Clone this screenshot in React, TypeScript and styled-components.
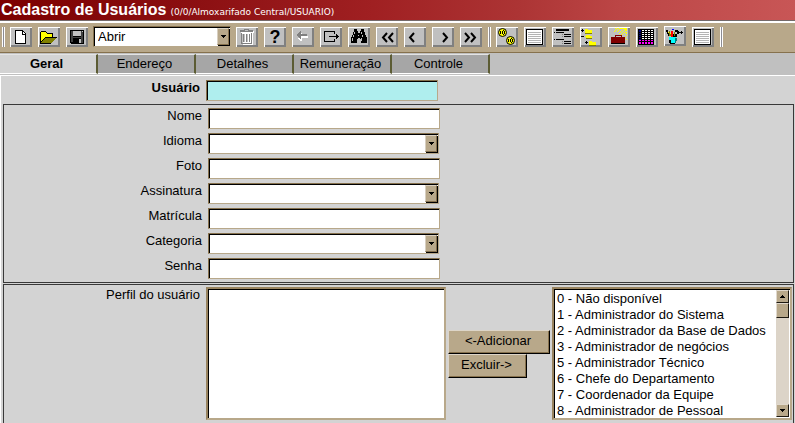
import React from "react";
import styled, { createGlobalStyle, css } from "styled-components";

const tan = "#b8a88a";
const brown = "#86714d";

const GlobalStyle = createGlobalStyle`
  * { box-sizing: border-box; }
  body {
    margin: 0;
    background: #d3d3d3;
    font-family: "Liberation Sans", Arial, sans-serif;
    font-size: 13px;
    color: #000;
  }
`;

const Page = styled.main`
  display: flex;
  flex-direction: column;
  min-height: 100vh;
`;

const TitleBar = styled.header`
  display: flex;
  align-items: baseline;
  gap: 4px;
  height: 21px;
  padding-left: 1px;
  line-height: 20px;
  color: #fff;
  white-space: nowrap;
  border-bottom: 1px solid #746a6a;
  background: linear-gradient(90deg, #7c0000 0%, #8c1012 25%, #a02022 47%, #ac3434 65%, #bc4646 78%, #c85656 100%);
`;

const Title = styled.h1`
  margin: 0;
  font-size: 16px;
  line-height: 20px;
`;

const Context = styled.span`
  font-family: "DejaVu Sans", Verdana, sans-serif;
  font-size: 9px;
`;

const ToolBar = styled.div`
  display: flex;
  align-items: flex-start;
  gap: 6px;
  height: 32px;
  padding: 4px 0 0 2px;
  background: ${tan};
  border-top: 2px solid #fff;
  border-bottom: 1px solid ${brown};
`;

const Grip = styled.span`
  width: 3px;
  height: 20px;
  margin: 0 -1px 0 0;
  border: 1px solid #fff;
  border-width: 0 1px;
  background: #8c8c94;
`;

const ToolButton = styled.button<{ $raised?: boolean }>`
  flex: none;
  width: 22px;
  height: 20px;
  padding: 0;
  overflow: hidden;
  border: 0;
  background: #c0c0c0;
  box-shadow: inset 1px 1px #fff, inset -2px -2px #808080;
  margin-top: ${(p) => (p.$raised ? "-1px" : "0")};
  font: bold 18px/19px "Liberation Sans", Arial, sans-serif;
  color: #000;

  svg { display: block; }
`;

const frame = css`
  border: 1px solid ${brown};
  border-right-color: ${tan};
  border-bottom-color: ${tan};
  border-radius: 0;
  box-shadow: inset 1px 1px #000;
  outline: none;
`;

const TextBox = styled.input<{ $key?: boolean }>`
  ${frame}
  width: 232px;
  height: 21px;
  padding: 1px 4px;
  font: inherit;
  background: ${(p) => (p.$key ? "#afeeee" : "#fff")};
`;

const DropFrame = styled.span<{ $tool?: boolean }>`
  display: grid;
  grid-template-columns: 1fr 14px;
  align-items: center;
  width: ${(p) => (p.$tool ? "138px" : "231px")};
  height: 21px;
  margin: ${(p) => (p.$tool ? "-1px -1px 0" : "0")};
`;

const DropSelect = styled.select`
  ${frame}
  appearance: none;
  grid-area: 1 / 1 / 2 / 3;
  width: 100%;
  height: 21px;
  padding: 0 16px 0 4px;
  font: inherit;
  background: #fff;
`;

const DropArrow = styled.span`
  grid-area: 1 / 2;
  display: flex;
  align-items: center;
  justify-content: center;
  width: 12px;
  height: 17px;
  pointer-events: none;
  background: ${tan};
  border: 1px solid #d8cfc0;
  border-right-color: ${brown};
  border-bottom-color: ${brown};
  box-shadow: 1px 1px #000;
`;

const TabStrip = styled.nav`
  display: flex;
  height: 23px;
  padding-top: 1px;
  background: #c0c0c0;
  border-bottom: 1px solid #fff;
`;

const Tab = styled.button<{ $active?: boolean }>`
  width: 98px;
  height: 20px;
  padding: 0 3px 1px 0;
  border: solid;
  border-width: 1px 2px 1px 0;
  border-color: #e4e4e4 #5c5c34 #fff #fff;
  background: ${(p) => (p.$active ? "#d3d3d3" : "#a6a6a6")};
  font: ${(p) => (p.$active ? "bold" : "normal")} 13px/16px "Liberation Sans", Arial, sans-serif;
  color: #000;
`;

const Form = styled.form`
  display: flex;
  flex: 1;
  flex-direction: column;
  gap: 1px;
  padding: 4px 1px 0 2px;
  border-left: 1px solid #fff;
  background: #d3d3d3;
`;

const Row = styled.div<{ $label: number }>`
  display: grid;
  grid-template-columns: ${(p) => p.$label}px 1fr;
  column-gap: 6px;
`;

const KeyRow = styled(Row)`
  margin-bottom: 2px;
`;

const Label = styled.label<{ $strong?: boolean }>`
  text-align: right;
  line-height: 16px;
  font-weight: ${(p) => (p.$strong ? "bold" : "normal")};
`;

const Group = styled.section`
  display: grid;
  gap: 4px;
  padding: 3px 0;
  border: 1px solid #383838;
`;

const ProfileGroup = styled(Group)`
  flex: 1;
  align-content: start;
  padding: 2px 0;
  border-bottom: 0;
`;

const Transfer = styled.div`
  display: flex;
  align-items: center;
  gap: 2px;
`;

const ListFrame = styled.div`
  display: flex;
  width: 240px;
  height: 133px;
  padding: 1px;
  background: #fff;
  border: 2px solid ${brown};
  border-color: ${tan};
  border-top-color: #98835f;
  border-left-color: #98835f;
  box-shadow: inset 1px 1px #000;
`;

const List = styled.select`
  flex: 1;
  min-width: 0;
  height: 127px;
  padding: 1px 0 0;
  border: 0;
  outline: none;
  appearance: none;
  overflow: hidden;
  scrollbar-width: none;
  background: transparent;
  font: inherit;

  option {
    min-height: 16px;
    padding: 0 2px;
    font-size: 13px;
    line-height: 16px;
    white-space: nowrap;
    color: #000;
  }
`;

const ScrollBar = styled.div`
  display: flex;
  flex-direction: column;
  flex: none;
  width: 13px;
  background: #dcd4c8;
`;

const ScrollPiece = styled.button<{ $thumb?: boolean }>`
  display: flex;
  align-items: center;
  justify-content: center;
  width: 13px;
  height: ${(p) => (p.$thumb ? "15px" : "13px")};
  padding: 0;
  background: ${tan};
  border: 1px solid #e0d8cc;
  border-right-color: #1c1810;
  border-bottom-color: #1c1810;

  &:last-child { margin-top: auto; }
`;

const Moves = styled.div`
  display: flex;
  flex-direction: column;
  align-items: flex-start;
  width: 102px;
`;

const MoveButton = styled.button<{ $wide?: boolean }>`
  width: ${(p) => (p.$wide ? "102px" : "79px")};
  height: 24px;
  padding: 0 2px 2px 0;
  background: ${tan};
  border: 1px solid #ddd5c8;
  border-right-color: #000;
  border-bottom-color: #000;
  box-shadow: inset -1px -1px ${brown};
  font: inherit;
`;

type Shape = [string, string];

/* Each shape is a fill colour and a path on the 22 x 20 button grid. */
const icons: Record<string, Shape[]> = {
  novo: [
    ["#000", "M5 3h8v1h1v1h1v1h1v11H5z"],
    ["#fff", "M6 4h6v4h3v8H6z"],
    ["#fff", "M13 5h1v1h1v1h-2z"],
  ],
  abrir: [
    ["#000", "M2 5h1V4h5v1h1v1h6v4h4v1h-1v1h-1v1h-1v1h-1v1h-1v1h-1v1H2z"],
    ["#ff0", "M3 5h5v1h1v1h5v3H7v1H6v1H5v1H4v1H3z"],
    ["#808000", "M7 11h11v1h-1v1h-1v1h-1v1h-1v1H3v-1h1v-1h1v-1h1v-1h1z"],
  ],
  salvar: [
    ["#000", "M4 3h14v14H5v-1H4z"],
    ["#404040", "M5 4h2v6h8V4h2v12h-2v-5H7v4H5z"],
    ["#c0c0c0", "M7 4h8v5H7zM13 12h2v4h-2zM16 4h1v1h-1z"],
  ],
  excluir: [
    ["#fff", "M9 3h5v1h4v2h-1v12H7v-1H6V6H5V5h3V4h1z"],
    ["#808080", "M8 2h5v1h4v2H4V3h4zM5 6h1v11H5zM15 6h1v11h-1zM6 16h10v1H6zM7 7h1v8H7zM10 7h1v8h-1zM13 7h1v8h-1z"],
    ["#c0c0c0", "M9 3h3v1H9zM8 7h1v8H8zM11 7h1v8h-1zM6 7h1v9H6z"],
  ],
  voltar: [
    ["#fff", "M8 6h2v3h6v2h-6v3H8v-1H7v-1H6v-1h2z"],
    ["#808080", "M8 4h1v3h6v2H9v3H8v-1H7v-1H6V9H5V7h1V6h1V5h1z"],
  ],
  sair: [
    ["#000", "M4 4h11v3h-1V5H5v9h9v-2h1v3H4zM9 9h7V7h1v1h1v1h1v1h-1v1h-1v1h-1v-2H9z"],
  ],
  procurar: [
    ["#000", "M6 2h3v2h1v2h2V4h1V2h3v3h1v3h1v2h1v6h-6v-4h-1v-1h-2v1H9v4H3v-6h1V8h1V5h1z"],
    ["#c0c0c0", "M6 5h1v2H6zM5 8h1v2H5zM4 11h1v3H4zM13 5h1v2h-1zM14 8h1v2h-1zM13 11h1v3h-1zM10 8h1v1h-1z"],
  ],
  lista: [
    ["#000", "M2 2h17v16H2z"],
    ["#fff", "M3 3h15v14H3z"],
    ["#b4b4b4", "M4 5h13v1H4zM4 7h13v1H4zM4 9h13v1H4zM4 11h13v1H4zM4 13h13v1H4zM4 15h13v1H4z"],
  ],
  topicos: [
    ["#000", "M4 2h13v2H4zM2 5h1v1H2zM4 5h8v1H4zM12 7h7v1h-7zM12 9h7v1h-7zM2 12h1v1H2zM4 12h8v1H4zM12 14h7v1h-7zM12 16h7v1h-7z"],
    ["#808080", "M10 7h1v1h-1zM10 9h1v1h-1zM10 14h1v1h-1zM10 16h1v1h-1z"],
  ],
  arvore: [
    ["#000", "M1 3h3v1H1zM2 2h1v3H2zM1 9h3v1H1zM5 15h3v1H5zM6 14h1v3H6z"],
    ["#808000", "M5 6h7v1H5zM6 11h6v1H6zM9 18h7v1H9z"],
    ["#ff0", "M5 2h3v1h4v3H5zM6 8h4v1h2v2H6v-1H5V9h1zM9 14h3v1h4v3H9z"],
  ],
  maleta: [
    ["#ff0", "M7 1h1v1H7zM9 1h2v1H9zM8 2h1v1H8zM12 1h7v3h-2V3h-1V2h-4zM6 4h1v1H6zM7 3h1v1H7zM9 4h1V3h1V2h1v1h-1v1h-1v1H9zM11 6h1V5h1V4h1V3h1v1h-1v1h-1v1h-1v1h-1zM13 7h1V6h1V5h1V4h1v1h-1v1h-1v1h-1v1h-1zM17 5h2v2h-1V6h-1zM16 7h1v1h-1zM18 8h1v1h-1zM17 10h1v1h-1zM18 12h1v1h-1z"],
    ["#800000", "M7 8h7v2h3v7H3v-7h4z"],
    ["#c0c0c0", "M8 9h5v1H8z"],
    ["#000", "M3 16h14v1H3z"],
  ],
  grade: [
    ["#000", "M2 2h16v16H2z"],
    ["#000080", "M3 3h2v2H3zM3 6h2v1H3zM3 8h2v1H3zM3 10h2v1H3zM3 12h2v1H3z"],
    ["#fff", "M6 3h2v1H6zM9 3h2v1H9zM12 3h2v1h-2zM15 3h2v1h-2zM6 5h2v1H6zM9 5h2v1H9zM12 5h2v1h-2zM15 5h2v1h-2zM6 7h2v1H6zM9 7h2v1H9zM12 7h2v1h-2zM15 7h2v1h-2zM6 9h2v1H6zM9 9h2v1H9zM12 9h2v1h-2zM15 9h2v1h-2zM6 11h2v1H6zM9 11h2v1H9zM12 11h2v1h-2zM15 11h2v1h-2z"],
    ["#f0f", "M3 13h2v1H3zM6 13h2v1H6zM9 13h2v1H9zM12 13h2v1h-2zM15 13h2v1h-2zM3 15h2v2H3zM6 15h2v2H6zM9 15h2v2H9zM12 15h2v2h-2zM15 15h2v2h-2z"],
  ],
  pinceis: [
    ["#000", "M2 4h2v2h1v2h1v2H4V8H3V6H2zM11 4h3v1h1v1h2V5h1v1h1v1h-1v1h-1V7h-2v1h-2V6h-2zM5 14h2v3h4v1H6v-1H5zM9 8h4v3H9z"],
    ["#808000", "M5 5h1v2h1v3H5zM10 6h1v4h-1z"],
    ["#ff0", "M4 6h1v1H4zM6 7h1v1H6z"],
    ["#0000ff", "M8 3h2v1H8z"],
    ["#f00", "M7 5h2v6H7z"],
    ["#0ff", "M5 11h7v2h-1v4H7v-3H5z"],
    ["#008080", "M11 12h2v3h-1v2h-1z"],
  ],
};

const chevrons: Record<string, string> = {
  primeiro: "M11 6L7 10.5L11 15M17 6L13 10.5L17 15",
  anterior: "M10 6L6 10.5L10 15",
  proximo: "M11 6L15 10.5L11 15",
  ultimo: "M5 6L9 10.5L5 15M11 6L15 10.5L11 15",
};

function ToolIcon({ name }: { name: string }) {
  if (name === "moedas") {
    return (
      <svg width="22" height="20" aria-hidden="true">
        {[[6, 5], [14, 13]].map(([x, y]) => (
          <g key={x} transform={`translate(${x} ${y})`}>
            <circle cx="0.5" cy="0.5" r="4" fill="#ff0" stroke="#000" />
            <path d="M-2 -1h1v3h-1zM0 -1h1v3h-1zM2 -1h1v3h-1zM1 -2h1v1h-1zM1 2h1v1h-1z" shapeRendering="crispEdges" />
          </g>
        ))}
      </svg>
    );
  }
  if (chevrons[name]) {
    return (
      <svg width="22" height="20" aria-hidden="true">
        <path d={chevrons[name]} fill="none" stroke="#000" strokeWidth="2" />
      </svg>
    );
  }
  return (
    <svg width="22" height="20" shapeRendering="crispEdges" aria-hidden="true">
      {icons[name].map(([fill, d], i) => (
        <path key={i} fill={fill} d={d} />
      ))}
    </svg>
  );
}

function Arrow({ up }: { up?: boolean }) {
  return (
    <svg width="5" height="3" shapeRendering="crispEdges" aria-hidden="true">
      <path d={up ? "M2 0h1v1h1v1h1v1H0V2h1V1h1z" : "M0 0h5v1H4v1H3v1H2V2H1V1H0z"} />
    </svg>
  );
}

function Tool({ name, label, raised }: { name: string; label: string; raised?: boolean }) {
  return (
    <ToolButton type="button" aria-label={label} $raised={raised}>
      <ToolIcon name={name} />
    </ToolButton>
  );
}

function Drop({ id, options, tool }: { id: string; options: string[]; tool?: boolean }) {
  return (
    <DropFrame $tool={tool}>
      <DropSelect id={id} aria-label={tool ? "Ação" : undefined}>
        {options.map((o) => (
          <option key={o}>{o}</option>
        ))}
      </DropSelect>
      <DropArrow>
        <Arrow />
      </DropArrow>
    </DropFrame>
  );
}

const fields = [
  { id: "nome", label: "Nome" },
  { id: "idioma", label: "Idioma", drop: true },
  { id: "foto", label: "Foto" },
  { id: "assinatura", label: "Assinatura", drop: true },
  { id: "matricula", label: "Matrícula" },
  { id: "categoria", label: "Categoria", drop: true },
  { id: "senha", label: "Senha", type: "password" },
];

const profiles = [
  "0 - Não disponível",
  "1 - Administrador do Sistema",
  "2 - Administrador da Base de Dados",
  "3 - Administrador de negócios",
  "5 - Administrador Técnico",
  "6 - Chefe do Departamento",
  "7 - Coordenador da Equipe",
  "8 - Administrador de Pessoal",
];

const tabs = ["Geral", "Endereço", "Detalhes", "Remuneração", "Controle"];

export default function App() {
  return (
    <Page>
      <GlobalStyle />
      <TitleBar>
        <Title>Cadastro de Usuários</Title>
        <Context>(0/0/Almoxarifado Central/USUARIO)</Context>
      </TitleBar>
      <ToolBar role="toolbar">
        <Grip />
        <Tool name="novo" label="Novo" />
        <Tool name="abrir" label="Abrir" />
        <Tool name="salvar" label="Salvar" />
        <Drop id="acao" options={["Abrir"]} tool />
        <Tool name="excluir" label="Excluir" />
        <ToolButton type="button">?</ToolButton>
        <Tool name="voltar" label="Voltar" />
        <Tool name="sair" label="Sair" />
        <Tool name="procurar" label="Procurar" />
        <Tool name="primeiro" label="Primeiro" />
        <Tool name="anterior" label="Anterior" />
        <Tool name="proximo" label="Próximo" />
        <Tool name="ultimo" label="Último" />
        <Grip />
        <Tool name="moedas" label="Moedas" />
        <Tool name="lista" label="Lista" />
        <Tool name="topicos" label="Tópicos" />
        <Tool name="arvore" label="Árvore" />
        <Tool name="maleta" label="Maleta" />
        <Tool name="grade" label="Grade" />
        <Tool name="pinceis" label="Pincéis" raised />
        <Tool name="lista" label="Relatório" />
        <Grip />
      </ToolBar>
      <TabStrip>
        {tabs.map((t, i) => (
          <Tab key={t} type="button" $active={i === 0}>
            {t}
          </Tab>
        ))}
      </TabStrip>
      <Form>
        <KeyRow $label={197}>
          <Label htmlFor="usuario" $strong>Usuário</Label>
          <TextBox id="usuario" $key />
        </KeyRow>
        <Group>
          {fields.map((f) => (
            <Row key={f.id} $label={198}>
              <Label htmlFor={f.id}>{f.label}</Label>
              {f.drop ? <Drop id={f.id} options={[""]} /> : <TextBox id={f.id} type={f.type || "text"} />}
            </Row>
          ))}
        </Group>
        <ProfileGroup>
          <Row $label={196}>
            <Label htmlFor="perfil">Perfil do usuário</Label>
            <Transfer>
              <ListFrame>
                <List id="perfil" multiple size={8} />
              </ListFrame>
              <Moves>
                <MoveButton type="button" $wide>&lt;-Adicionar</MoveButton>
                <MoveButton type="button">Excluir-&gt;</MoveButton>
              </Moves>
              <ListFrame>
                <List multiple size={8} aria-label="Perfis disponíveis">
                  {profiles.map((p) => (
                    <option key={p}>{p}</option>
                  ))}
                </List>
                <ScrollBar>
                  <ScrollPiece type="button" aria-label="Rolar para cima"><Arrow up /></ScrollPiece>
                  <ScrollPiece type="button" aria-label="Posição" $thumb />
                  <ScrollPiece type="button" aria-label="Rolar para baixo"><Arrow /></ScrollPiece>
                </ScrollBar>
              </ListFrame>
            </Transfer>
          </Row>
        </ProfileGroup>
      </Form>
    </Page>
  );
}
